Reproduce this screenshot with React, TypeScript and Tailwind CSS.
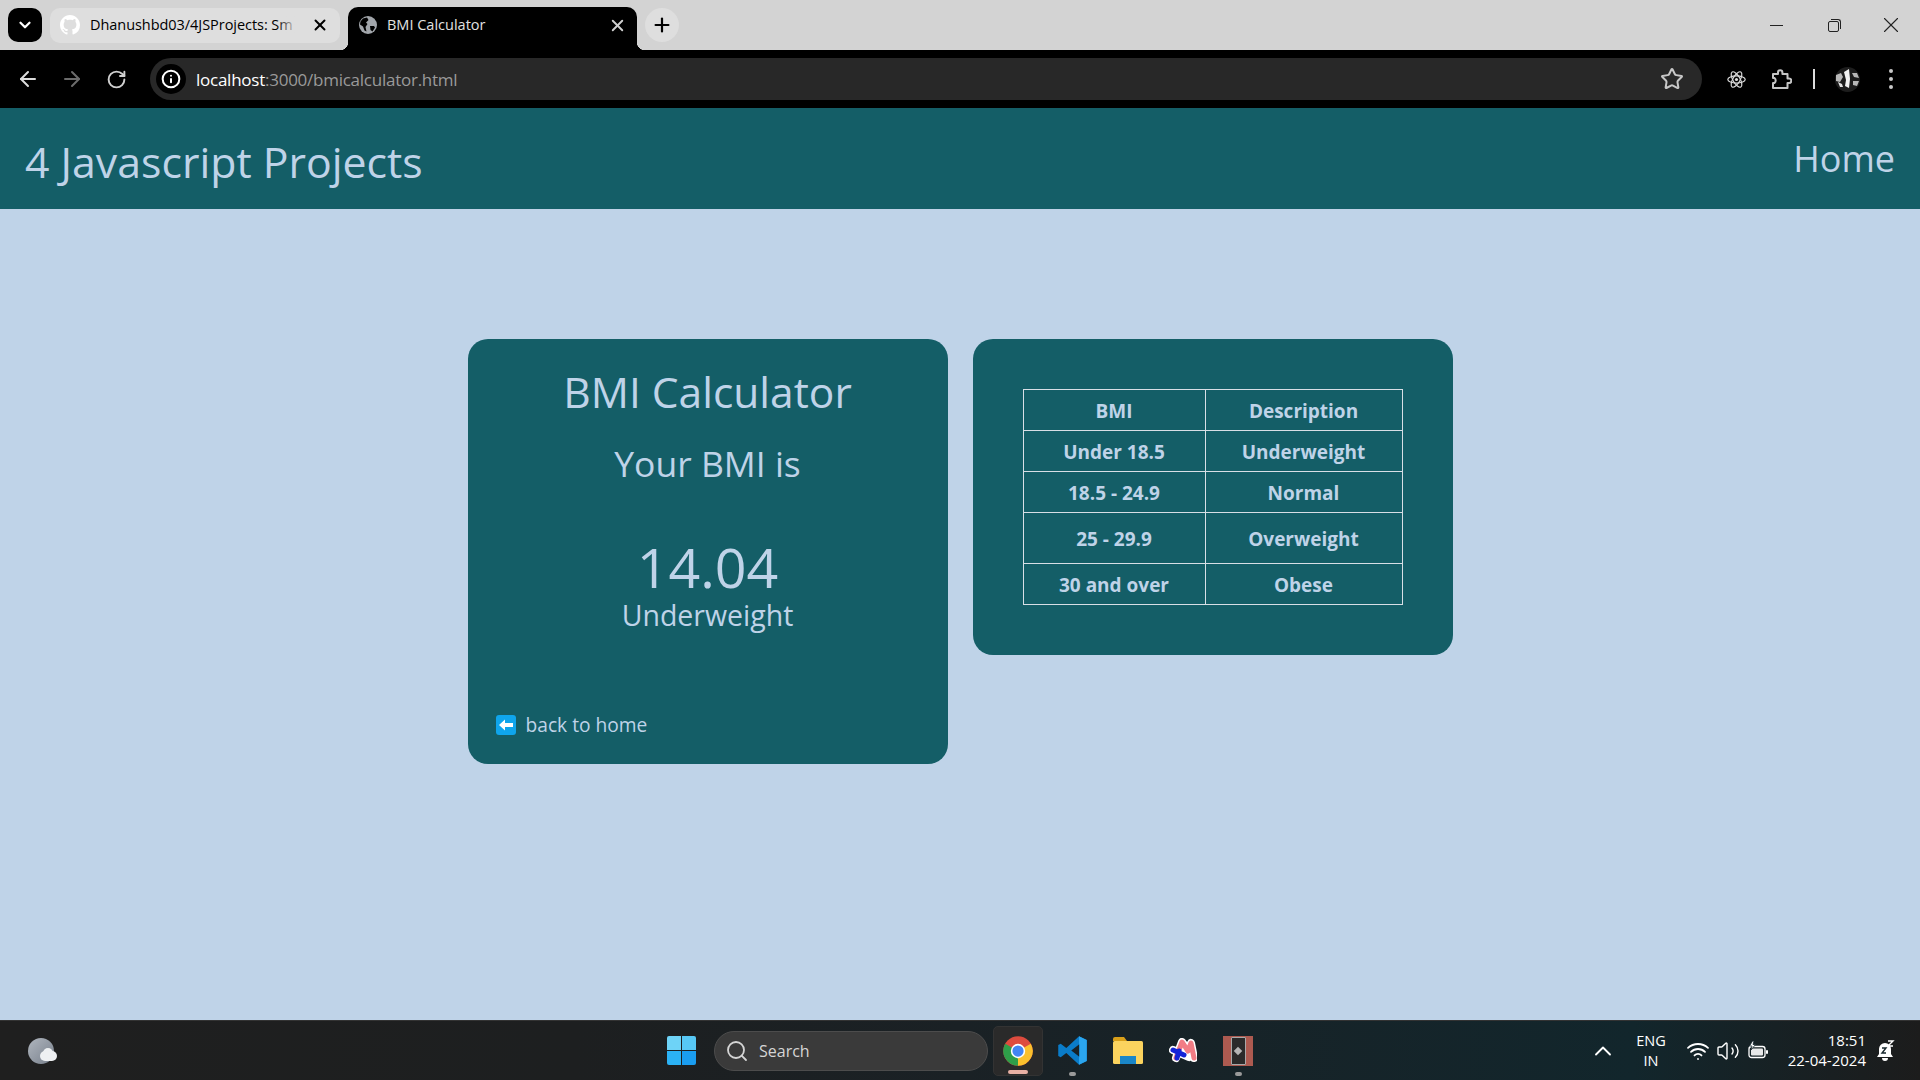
import { ArrowLeft, ArrowRight, ChevronDown, ChevronUp, Info, Plus, RotateCw, Search, Star, Volume2, Wifi, X } from 'lucide-react'

const rows = [
  { bmi: 'BMI', desc: 'Description', tall: false },
  { bmi: 'Under 18.5', desc: 'Underweight', tall: false },
  { bmi: '18.5 - 24.9', desc: 'Normal', tall: false },
  { bmi: '25 - 29.9', desc: 'Overweight', tall: true },
  { bmi: '30 and over', desc: 'Obese', tall: false },
]

function GithubMark() {
  return (
    <svg viewBox="0 0 16 16" className="h-[20px] w-[20px] shrink-0 fill-white">
      <path d="M8 0C3.58 0 0 3.58 0 8c0 3.54 2.29 6.53 5.47 7.59.4.07.55-.17.55-.38 0-.19-.01-.82-.01-1.49-2.01.37-2.53-.49-2.69-.94-.09-.23-.48-.94-.82-1.13-.28-.15-.68-.52-.01-.53.63-.01 1.08.58 1.23.82.72 1.21 1.87.87 2.33.66.07-.52.28-.87.51-1.07-1.78-.2-3.64-.89-3.64-3.95 0-.87.31-1.59.82-2.15-.08-.2-.36-1.02.08-2.12 0 0 .67-.21 2.2.82.64-.18 1.32-.27 2-.27s1.36.09 2 .27c1.53-1.04 2.2-.82 2.2-.82.44 1.1.16 1.92.08 2.12.51.56.82 1.27.82 2.15 0 3.07-1.87 3.75-3.65 3.95.29.25.54.73.54 1.48 0 1.07-.01 1.93-.01 2.2 0 .21.15.46.55.38A8.01 8.01 0 0 0 16 8c0-4.42-3.58-8-8-8z" />
    </svg>
  )
}

function GlobeIcon() {
  return (
    <svg viewBox="0 0 20 20" className="h-[20px] w-[20px] shrink-0">
      <circle cx="10" cy="10" r="9" fill="#a2a6ab" />
      <path d="M5 3.5 9 2.5 10.5 5 8 7.5 9.5 9 7.5 12 8.5 16.5 6.5 15.5 5 11.5 2 9.5 2.5 6.5zM12 11h4l1 1.5-2.5 4-2-1.5z" fill="#000" />
    </svg>
  )
}

function ReactLogo() {
  return (
    <svg viewBox="0 0 24 24" className="h-[19px] w-[19px] shrink-0 fill-none stroke-[#dcdcdc]" strokeWidth="1.5">
      <ellipse cx="12" cy="12" rx="11" ry="4.5" />
      <ellipse cx="12" cy="12" rx="11" ry="4.5" transform="rotate(60 12 12)" />
      <ellipse cx="12" cy="12" rx="11" ry="4.5" transform="rotate(120 12 12)" />
      <circle cx="12" cy="12" r="2" fill="#dcdcdc" stroke="none" />
    </svg>
  )
}

function ExtensionsIcon() {
  return (
    <svg viewBox="0 0 21 21" className="h-[21px] w-[21px] shrink-0 fill-none stroke-[#c4c4c4]" strokeWidth="2" strokeLinejoin="round">
      <path d="M2 5h5V3.5a2.2 2.2 0 0 1 4.4 0V5h5.1v4.5H18a2.3 2.3 0 0 1 0 4.6h-1.5V19H2v-5h1.5a3.2 3.2 0 0 0 0-5H2z" />
    </svg>
  )
}

function MenuDots() {
  return (
    <div className="ml-[28px] flex h-[20px] w-[6px] shrink-0 flex-col items-center justify-between">
      <div className="h-[4px] w-[4px] rounded-full bg-[#c8c8c8]" />
      <div className="h-[4px] w-[4px] rounded-full bg-[#c8c8c8]" />
      <div className="h-[4px] w-[4px] rounded-full bg-[#c8c8c8]" />
    </div>
  )
}

function Avatar() {
  return (
    <svg viewBox="0 0 25 25" className="ml-[20px] h-[25px] w-[25px] shrink-0">
      <circle cx="12.5" cy="12.5" r="12.5" fill="#1d1d1d" />
      <path d="M9 5 14 2 15 12 14 21 10 19 11 13z" fill="#f2f2f2" />
      <path d="M1 8 6 6 8 10 5 15 1 14zM17 6 22 6 24 11 19 10zM18 14 24 14 22 19 18 18z" fill="#b8b8b8" />
      <path d="M3 15 7 17 8 20 5 20z" fill="#e4e4e4" />
    </svg>
  )
}

function TabStrip() {
  return (
    <div className="flex h-[50px] items-center bg-[#d3d3d3] pl-[8px]">
      <div className="flex h-[34px] w-[34px] items-center justify-center rounded-[10px] bg-black">
        <ChevronDown className="h-[18px] w-[18px] text-white" strokeWidth={3} />
      </div>
      <div className="ml-[8px] flex h-[35px] w-[290px] items-center rounded-[10px] bg-[#dedede] pl-[10px] pr-[11px] text-[14.5px] text-black">
        <GithubMark />
        <span className="relative ml-[10px] w-[207px] overflow-hidden whitespace-nowrap tracking-[-0.05px]">
          Dhanushbd03/4JSProjects: Sm
          <span className="absolute bottom-0 right-0 top-0 w-[20px] bg-gradient-to-r from-transparent to-[#dedede]" />
        </span>
        <X className="ml-auto h-[18px] w-[18px]" strokeWidth={2.6} />
      </div>
      <div className="relative ml-[8px] flex h-[43px] w-[289px] items-center self-end rounded-t-[10px] bg-black pb-[7px] pl-[10px] pr-[10px] text-[14.5px] text-[#e2e2e2]">
        <div className="absolute -left-[8px] bottom-0 h-[8px] w-[8px] bg-[radial-gradient(circle_at_0_0,#d3d3d3_8px,#000_8.5px)]" />
        <div className="absolute -right-[8px] bottom-0 h-[8px] w-[8px] bg-[radial-gradient(circle_at_100%_0,#d3d3d3_8px,#000_8.5px)]" />
        <GlobeIcon />
        <span className="ml-[9px]">BMI Calculator</span>
        <X className="ml-auto h-[19px] w-[19px] text-[#d0d0d0]" strokeWidth={2.4} />
      </div>
      <div className="ml-[8px] flex h-[34px] w-[34px] items-center justify-center rounded-full bg-[#dedede]">
        <Plus className="h-[22px] w-[22px] text-black" strokeWidth={2.4} />
      </div>
      <div className="ml-auto flex items-center text-[#222]">
        <div className="flex h-[50px] w-[58px] items-center justify-center pl-[3px]">
          <div className="h-[1px] w-[13px] bg-[#222]" />
        </div>
        <div className="flex h-[50px] w-[58px] items-center justify-center">
          <div className="relative mt-[2px] h-[11px] w-[11px] rounded-[2px] border border-[#222]">
            <div className="absolute -right-[3px] -top-[3px] h-[10px] w-[10px] rounded-tr-[3px] border-r border-t border-[#222]" />
          </div>
        </div>
        <div className="flex h-[50px] w-[58px] items-center justify-center">
          <X className="h-[26px] w-[26px]" strokeWidth={1} />
        </div>
      </div>
    </div>
  )
}

function Toolbar() {
  return (
    <div className="flex h-[58px] items-center bg-black pl-[16px] text-[#c8c8c8]">
      <ArrowLeft className="h-[24px] w-[24px] shrink-0 text-[#dcdcdc]" strokeWidth={2} />
      <ArrowRight className="ml-[20px] h-[24px] w-[24px] shrink-0 text-[#6c6c6c]" strokeWidth={2} />
      <RotateCw className="ml-[22px] h-[21px] w-[21px] shrink-0 text-[#d0d0d0]" strokeWidth={2.2} />
      <div className="ml-[23px] flex h-[42px] w-[1552px] shrink-0 items-center rounded-full bg-[#282828] pl-[6px] pr-[18px]">
        <div className="flex h-[30px] w-[30px] items-center justify-center rounded-full bg-black">
          <Info className="h-[20px] w-[20px] text-white" strokeWidth={2.4} />
        </div>
        <span className="ml-[10px] pt-[1px] text-[17px] tracking-[-0.25px] text-white">localhost<span className="text-[#9a9a9a]">:3000/bmicalculator.html</span></span>
        <Star className="ml-auto h-[24px] w-[24px] text-[#c8c8c8]" strokeWidth={2} />
      </div>
      <div className="ml-[25px]"><ReactLogo /></div>
      <div className="ml-[25px]"><ExtensionsIcon /></div>
      <div className="ml-[21px] h-[20px] w-[2px] shrink-0 bg-[#dcdcdc]" />
      <Avatar />
      <MenuDots />
    </div>
  )
}

function Taskbar() {
  return (
    <div className="flex h-[60px] items-center border-t border-[#333] bg-[linear-gradient(90deg,#1f1f1f_0%,#1d1f20_30%,#1a2125_50%,#12262c_85%,#1c1c1c_100%)] text-white">
      <div className="relative ml-[28px] h-[26px] w-[26px] shrink-0 rounded-full bg-gradient-to-br from-[#b0b6be] to-[#78808c]">
        <div className="absolute -right-[3px] bottom-[3px] h-[10px] w-[17px] rounded-full bg-[#eef0f2]" />
        <div className="absolute bottom-[6px] right-[1px] h-[10px] w-[10px] rounded-full bg-[#eef0f2]" />
      </div>
      <div className="ml-[613px] grid h-[29px] w-[29px] shrink-0 grid-cols-2 gap-[1px]">
        <div className="rounded-tl-[2px] bg-[#6ed3f7]" />
        <div className="rounded-tr-[2px] bg-[#57c8f5]" />
        <div className="rounded-bl-[2px] bg-[#2bb2f5]" />
        <div className="rounded-br-[2px] bg-[#1a9df0]" />
      </div>
      <div className="ml-[18px] flex h-[40px] w-[274px] shrink-0 items-center rounded-full border border-[#4c4c4c] bg-[#3a3a3a] pl-[10px] text-[16px] text-[#d5d5d5]">
        <Search className="h-[24px] w-[24px]" strokeWidth={1.8} />
        <span className="ml-[10px]">Search</span>
      </div>
      <div className="relative ml-[5px] flex h-[50px] w-[50px] shrink-0 items-center justify-center rounded-[5px] border border-[#333] bg-[#2a2a2a]">
        <svg viewBox="0 0 48 48" className="h-[30px] w-[30px]">
          <circle cx="24" cy="24" r="23.5" fill="#dd4b3e" />
          <path d="M24 24 44.4 12.2A23.5 23.5 0 0 1 24 47.5Z" fill="#fbc02d" />
          <path d="M24 24 24 47.5A23.5 23.5 0 0 1 3.6 12.2Z" fill="#2e9e49" />
          <circle cx="24" cy="24" r="11.5" fill="#fff" />
          <circle cx="24" cy="24" r="9" fill="#4285f4" />
        </svg>
        <div className="absolute bottom-[1px] h-[4px] w-[20px] rounded-full bg-[#e8b0a4]" />
      </div>
      <div className="relative ml-[14px] flex h-[50px] w-[31px] shrink-0 items-center justify-center">
        <svg viewBox="0 0 100 100" className="h-[31px] w-[31px]">
          <path fillRule="evenodd" d="M71 4 96 16V84L71 96 30 58 12 72 4 68V32L12 28 30 42ZM72 30 46 50 72 70Z" fill="#0a7cc9" />
          <path fillRule="evenodd" d="M71 4 96 16V84L71 96V70L72 70V30L71 30Z" fill="#2ba5ee" />
        </svg>
        <div className="absolute bottom-[0px] h-[4px] w-[7px] rounded-full bg-[#9a9a9a]" />
      </div>
      <svg viewBox="0 0 30 27" className="ml-[25px] h-[27px] w-[30px] shrink-0">
        <path d="M0 2a2 2 0 0 1 2-2h9l3 4h-14z" fill="#d9a01a" />
        <rect x="0" y="4" width="30" height="23" rx="1.5" fill="#fbd35e" />
        <rect x="7" y="19" width="16" height="8" fill="#1a86c8" />
      </svg>
      <svg viewBox="0 0 28 26" className="ml-[26px] h-[26px] w-[28px] shrink-0" strokeLinecap="round" strokeLinejoin="round">
        <path d="M4 12 20 19M7 20 13 4 19 12 22 5 25 20" fill="none" stroke="#fff" strokeWidth="8" />
        <path d="M7 20 13 4 19 13 22 5 25 20" fill="none" stroke="#f27d85" strokeWidth="5" />
        <path d="M4 12 15 17M8 20 10 13" fill="none" stroke="#1424d8" strokeWidth="5" />
      </svg>
      <div className="relative ml-[26px] flex h-[50px] w-[30px] shrink-0 items-center justify-center">
        <div className="flex h-[30px] w-[30px] justify-center bg-[#ad5a50] pt-[1px]">
          <div className="flex h-[28px] w-[15px] items-center justify-center rounded-[1px] border border-[#a8a8a8] bg-[#2a2a2a]">
            <div className="h-[6px] w-[6px] rotate-45 bg-[#b5b5b5]" />
          </div>
        </div>
        <div className="absolute bottom-[0px] h-[4px] w-[7px] rounded-full bg-[#9a9a9a]" />
      </div>
      <ChevronUp className="ml-[336px] h-[28px] w-[28px] shrink-0" strokeWidth={1.6} />
      <div className="ml-[19px] flex w-[30px] shrink-0 flex-col items-center text-[14.5px] leading-[20px]">
        <span>ENG</span>
        <span>IN</span>
      </div>
      <Wifi className="ml-[20px] h-[24px] w-[24px] shrink-0" strokeWidth={1.8} />
      <Volume2 className="ml-[6px] h-[24px] w-[24px] shrink-0" strokeWidth={1.4} />
      <svg viewBox="0 0 20 20" className="ml-[8px] h-[20px] w-[20px] shrink-0">
        <rect x="1" y="5.5" width="16" height="11" rx="2.5" fill="none" stroke="#fff" strokeWidth="1.3" />
        <rect x="3" y="7.5" width="12" height="7" rx="1" fill="#e8e8e8" />
        <rect x="18" y="9" width="2" height="4" rx="1" fill="#fff" />
        <path d="M4.5 0 1.5 5H4L3 9 7.5 3.5H5L6 0Z" fill="#fff" stroke="#17272d" strokeWidth="0.8" />
      </svg>
      <div className="mb-[2px] ml-[20px] flex w-[78px] shrink-0 flex-col items-end whitespace-nowrap text-[15px] leading-[20px]">
        <span>18:51</span>
        <span>22-04-2024</span>
      </div>
      <svg viewBox="0 0 18 22" className="ml-[11px] h-[22px] w-[18px] shrink-0">
        <path d="M8 3a6 6 0 0 0-6 6v5l-2 3h16l-2-3V9a6 6 0 0 0-6-6zM5 18h6a3 3 0 0 1-6 0z" fill="#fff" />
        <path d="M5 8h4l-4 5h4" fill="none" stroke="#17272d" strokeWidth="1.4" />
        <path d="M11 1h5l-5 5h5" fill="none" stroke="#fff" strokeWidth="1.4" />
      </svg>
    </div>
  )
}

export default function App() {
  return (
    <div className="flex h-[1080px] w-[1920px] flex-col overflow-hidden bg-[#bfd3e8] font-['Open_Sans',sans-serif]">
      <TabStrip />
      <Toolbar />
      <nav className="flex h-[101px] items-start justify-between bg-[#145e67] px-[25px] text-[#bfd3e8]">
        <span className="mt-[27px] text-[42.8px] leading-[54px]">4 Javascript Projects</span>
        <span className="mt-[27px] text-[36px] leading-[48px]">Home</span>
      </nav>
      <main className="flex flex-1 items-start justify-center gap-[25px] pt-[130px] text-[#bfd3e8]">
        <section className="flex h-[425px] w-[480px] flex-col rounded-[20px] bg-[#145e67] px-[28px] text-center">
          <h1 className="mt-[26px] text-[42.5px] leading-[54px]">BMI Calculator</h1>
          <p className="mt-[20px] text-[35.5px] leading-[48px]">Your BMI is</p>
          <p className="mt-[50px] text-[55.5px] leading-[60px]">14.04</p>
          <p className="text-[28.5px] leading-[36px]">Underweight</p>
          <a className="mb-[25px] mt-auto flex items-center text-left text-[19.2px] leading-[28px]">
            <span className="flex h-[20px] w-[20px] items-center justify-center rounded-[3px] bg-[#0fa5ec]">
              <svg viewBox="0 0 20 20" className="h-[20px] w-[20px] fill-white">
                <path d="M3 10 9 4.5V8h8v4H9v3.5Z" />
              </svg>
            </span>
            <span className="ml-[10px]">back to home</span>
          </a>
        </section>
        <section className="w-[480px] rounded-[20px] bg-[#145e67] p-[50px]">
          <table className="w-[380px] border-collapse text-center text-[19px] font-bold">
            <tbody>
              {rows.map((row) => (
                <tr key={row.bmi} className={row.tall ? 'h-[51px]' : 'h-[41px]'}>
                  <td className="w-[182px] border border-[#d8dfe6] p-0 pt-[3px]">{row.bmi}</td>
                  <td className="border border-[#d8dfe6] p-0 pt-[3px]">{row.desc}</td>
                </tr>
              ))}
            </tbody>
          </table>
        </section>
      </main>
      <Taskbar />
    </div>
  )
}
